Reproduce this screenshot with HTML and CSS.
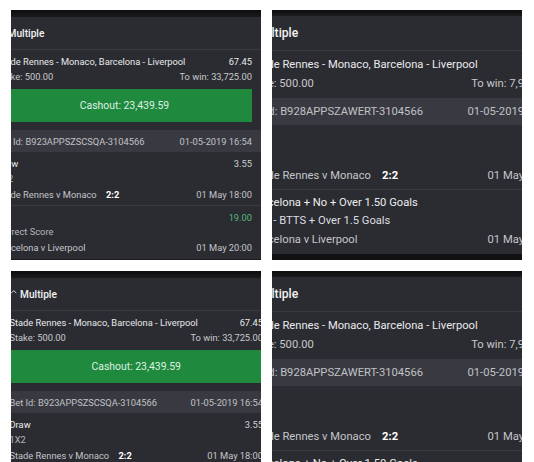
FILE: index.html
```html
<!DOCTYPE html>
<html lang="en">
<head>
<meta charset="utf-8">
<title>Multiple bets</title>
<link rel="stylesheet" href="styles.css">
</head>
<body>
<main class="collage">

  <section class="shot shot--small shot--tl">
    <div class="topbar"></div>
    <div class="card">
      <header class="head"><span class="head-title"><svg class="caret" viewBox="0 0 10 6"><path d="M1 5.2 5 1 9 5.2"/></svg>Multiple</span></header>
      <div class="info">
        <div class="line title"><span>Stade Rennes - Monaco, Barcelona - Liverpool</span><span>67.45</span></div>
        <div class="line sub"><span>Stake: 500.00</span><span>To win: 33,725.00</span></div>
      </div>
      <div class="cashout">Cashout: 23,439.59</div>
      <div class="line band"><span>Bet Id: B923APPSZSCSQA-3104566</span><span>01-05-2019 16:54</span></div>
      <div class="sel">
        <div class="line pick"><span>Draw</span><span class="odds">3.55</span></div>
        <div class="line market"><span>1X2</span></div>
        <div class="line match"><span>Stade Rennes v Monaco<b class="score">2:2</b></span><span>01 May 18:00</span></div>
      </div>
      <div class="sel">
        <div class="line pick"><span></span><span class="odds odds--up">19.00</span></div>
        <div class="line market"><span>Correct Score</span></div>
        <div class="line match"><span>Barcelona v Liverpool</span><span>01 May 20:00</span></div>
      </div>
    </div>
    <div class="endbar"></div>
  </section>

  <section class="shot shot--large">
    <div class="topbar"></div>
    <div class="card">
      <header class="head"><span class="head-title"><svg class="caret" viewBox="0 0 10 6"><path d="M1 5.2 5 1 9 5.2"/></svg>Multiple</span></header>
      <div class="info">
        <div class="line title"><span>Stade Rennes - Monaco, Barcelona - Liverpool</span></div>
        <div class="line sub"><span>Stake: 500.00</span><span>To win: 7,9</span></div>
      </div>
      <div class="line band"><span>Bet Id: B928APPSZAWERT-3104566</span><span>01-05-2019</span></div>
      <div class="sel">
        <div class="line pick"></div>
        <div class="line market"></div>
        <div class="line match"><span>Stade Rennes v Monaco<b class="score">2:2</b></span><span>01 May</span></div>
      </div>
      <div class="sel">
        <div class="line pick"><span>Barcelona + No + Over 1.50 Goals</span></div>
        <div class="line market market--bright"><span>1X2 - BTTS + Over 1.5 Goals</span></div>
        <div class="line match"><span>Barcelona v Liverpool</span><span>01 May</span></div>
      </div>
    </div>
    <div class="endbar"></div>
  </section>

  <section class="shot shot--small shot--bl">
    <div class="topbar"></div>
    <div class="card">
      <header class="head"><span class="head-title"><svg class="caret" viewBox="0 0 10 6"><path d="M1 5.2 5 1 9 5.2"/></svg>Multiple</span></header>
      <div class="info">
        <div class="line title"><span>Stade Rennes - Monaco, Barcelona - Liverpool</span><span>67.45</span></div>
        <div class="line sub"><span>Stake: 500.00</span><span>To win: 33,725.00</span></div>
      </div>
      <div class="cashout">Cashout: 23,439.59</div>
      <div class="line band"><span>Bet Id: B923APPSZSCSQA-3104566</span><span>01-05-2019 16:54</span></div>
      <div class="sel">
        <div class="line pick"><span>Draw</span><span class="odds">3.55</span></div>
        <div class="line market"><span>1X2</span></div>
        <div class="line match"><span>Stade Rennes v Monaco<b class="score">2:2</b></span><span>01 May 18:00</span></div>
      </div>
    </div>
  </section>

  <section class="shot shot--large">
    <div class="topbar"></div>
    <div class="card">
      <header class="head"><span class="head-title"><svg class="caret" viewBox="0 0 10 6"><path d="M1 5.2 5 1 9 5.2"/></svg>Multiple</span></header>
      <div class="info">
        <div class="line title"><span>Stade Rennes - Monaco, Barcelona - Liverpool</span></div>
        <div class="line sub"><span>Stake: 500.00</span><span>To win: 7,9</span></div>
      </div>
      <div class="line band"><span>Bet Id: B928APPSZAWERT-3104566</span><span>01-05-2019</span></div>
      <div class="sel">
        <div class="line pick"></div>
        <div class="line market"></div>
        <div class="line match"><span>Stade Rennes v Monaco<b class="score">2:2</b></span><span>01 May</span></div>
      </div>
      <div class="sel">
        <div class="line pick"><span>Barcelona + No + Over 1.50 Goals</span></div>
      </div>
    </div>
  </section>

</main>
</body>
</html>
```
FILE: styles.css
```css
* {
  box-sizing: border-box;
  margin: 0;
  padding: 0;
}

html,
body {
  background: #ffffff;
}

body {
  width: 534px;
  height: 462px;
  overflow: hidden;
  font-family: Roboto, "Noto Sans", sans-serif;
}

.collage {
  display: grid;
  grid-template-columns: 250px 250px;
  grid-template-rows: 250px 250px;
  column-gap: 11px;
  row-gap: 11px;
  padding: 10px 0 0 11px;
}

/* one cropped phone screenshot */
.shot {
  display: flex;
  flex-direction: column;
  overflow: hidden;
  background: #2b2c31;
  color: #e6e6e8;
}

.topbar {
  flex: none;
  height: 7px;
  background: linear-gradient(#0d0d0f, #1b1b1e);
}

.shot--large .topbar {
  height: 6px;
}

.card {
  flex: none;
  font-size: 9.3px;
  --pr: 9px;
  margin-left: -14px;
}

.shot--bl .card {
  margin-left: -1.5px;
  margin-right: -2px;
  --pr: 0px;
}

.shot--large .card {
  font-size: 11.2px;
  margin-left: -21px;
  margin-right: -2px;
  --pr: 0px;
}

.head {
  height: 33px;
  display: flex;
  align-items: center;
  padding-right: var(--pr);
  border-bottom: 1px solid #3a3b41;
  font-size: 1.09em;
  font-weight: 500;
  color: #f2f2f3;
  white-space: nowrap;
}

.shot--large .head {
  height: 35px;
}

.shot--large .head-title {
  margin-left: -0.8em;
}

.caret {
  width: 0.55em;
  height: 0.33em;
  margin-left: 0.1em;
  margin-right: 0.4em;
  vertical-align: 0.4em;
  overflow: visible;
}

.caret path {
  fill: none;
  stroke: #e6e6e8;
  stroke-width: 1.6;
  stroke-linecap: round;
  stroke-linejoin: round;
}

.line {
  display: flex;
  justify-content: space-between;
  align-items: center;
  white-space: nowrap;
}

.info {
  padding: 0.42em var(--pr) 0.47em 0;
}

.info .line {
  height: 1.65em;
}

.title {
  color: #e9e9eb;
}

.sub {
  color: #c8c9cd;
}

.shot--large .sub > span:first-child,
.shot--large .band > span:first-child {
  margin-left: -0.45em;
}

.cashout {
  display: flex;
  align-items: center;
  justify-content: center;
  height: 3.17em;
  margin: 0 var(--pr) 0.77em 0;
  background: #1f8a3e;
  color: #dff0e3;
  font-size: 1.12em;
  white-space: nowrap;
}

.band {
  height: 2.4em;
  padding-right: var(--pr);
  background: #393a41;
  color: #c0c1c5;
}

.sel {
  padding: 0.48em var(--pr) 0.42em 0;
}

.sel + .sel {
  padding-top: 0.42em;
  border-top: 1px solid #3a3b41;
}

.sel .line {
  height: 1.55em;
}

.sel .match {
  margin-top: 0.15em;
  color: #c4c5c9;
}

.pick {
  color: #ececee;
}

.market {
  color: #b6b7bb;
}

.market--bright {
  color: #dcdde0;
}

.odds {
  color: #cfd0d3;
}

.odds--up {
  color: #56b77b;
}

.score {
  margin-left: 1em;
  font-weight: 700;
  color: #ffffff;
}

.endbar {
  flex: none;
  margin-top: auto;
  height: 3px;
  background: #1b1b1e;
}

.shot--large .endbar {
  height: 6px;
  background: #111113;
}
```
